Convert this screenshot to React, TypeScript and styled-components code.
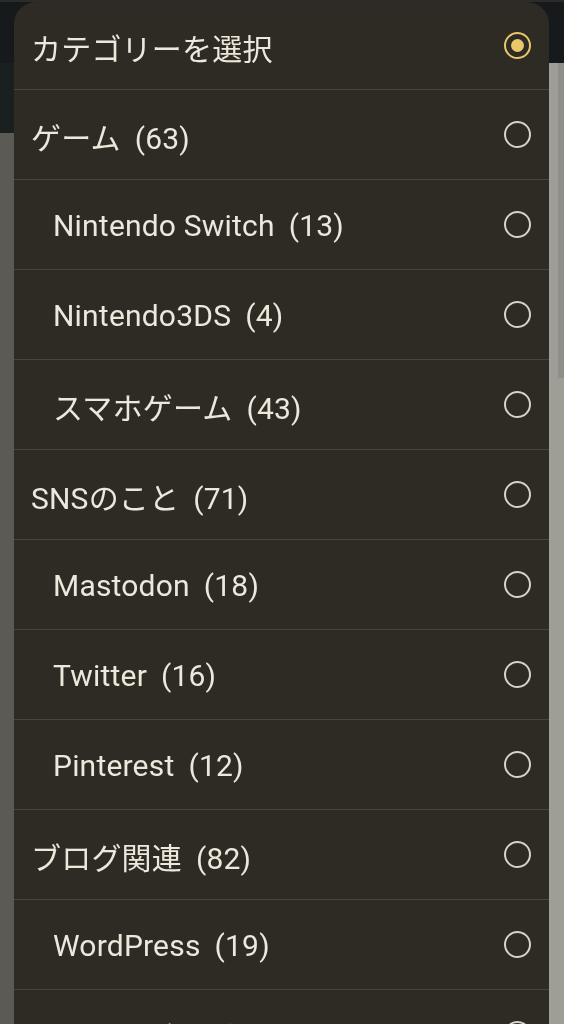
import React, { useState } from "react";
import styled, { createGlobalStyle } from "styled-components";

const GlobalStyle = createGlobalStyle`
  html, body {
    margin: 0;
    padding: 0;
    height: 100%;
    overflow: hidden;
    background: #5b5a54;
    font-family: Roboto, "Noto Sans CJK JP", sans-serif;
  }
`;

const Page = styled.div`
  display: flex;
  flex-direction: column;
  height: 1024px;
  border-top: 2px solid #2b2b29;
`;

const Header = styled.div`
  height: 61px;
  background: #161a1c;
`;

const Body = styled.div`
  flex: 1;
  display: flex;
`;

const LeftRail = styled.div`
  width: 14px;
  display: flex;
  flex-direction: column;
`;

const RailTop = styled.div`
  height: 70px;
  background: #1a1f1f;
`;

const RailRest = styled.div`
  flex: 1;
  background: #5b5a54;
`;

const Content = styled.div`
  flex: 1;
  background: #9e9d96;
  display: flex;
  justify-content: flex-end;
`;

const Scrollbar = styled.div`
  width: 6px;
  height: 315px;
  background: #8f8e88;
`;

const Dialog = styled.div`
  position: fixed;
  left: 14px;
  top: 2px;
  width: 535px;
  height: 1100px;
  background: #2e2b24;
  border-radius: 22px 22px 0 0;
  overflow: hidden;
`;

const Row = styled.label<{ $first?: boolean }>`
  display: flex;
  align-items: center;
  justify-content: space-between;
  height: ${(p) => (p.$first ? 87 : 89)}px;
  border-bottom: 1px solid #47443d;
  padding: 0 17px;
  cursor: pointer;
`;

const Label = styled.span<{ $indent: boolean }>`
  padding-left: ${(p) => (p.$indent ? 22 : 0)}px;
  padding-top: 2px;
  font-size: 30px;
  letter-spacing: 0.2px;
  color: #ede7dc;
  white-space: nowrap;
`;

const Count = styled.span`
  margin-left: 14px;
`;

const Radio = styled.span<{ $on: boolean }>`
  width: 27px;
  height: 27px;
  box-sizing: border-box;
  border-radius: 50%;
  border: 2.5px solid ${(p) => (p.$on ? "#e8c86a" : "#d8d3c7")};
  display: flex;
  align-items: center;
  justify-content: center;
  margin-right: 1px;

  &::after {
    content: "";
    width: 13px;
    height: 13px;
    border-radius: 50%;
    background: #e8c86a;
    display: ${(p) => (p.$on ? "block" : "none")};
  }
`;

type Category = { name: string; count?: number; child?: boolean };

const categories: Category[] = [
  { name: "カテゴリーを選択" },
  { name: "ゲーム", count: 63 },
  { name: "Nintendo Switch", count: 13, child: true },
  { name: "Nintendo3DS", count: 4, child: true },
  { name: "スマホゲーム", count: 43, child: true },
  { name: "SNSのこと", count: 71 },
  { name: "Mastodon", count: 18, child: true },
  { name: "Twitter", count: 16, child: true },
  { name: "Pinterest", count: 12, child: true },
  { name: "ブログ関連", count: 82 },
  { name: "WordPress", count: 19, child: true },
  { name: "はてなブログ", count: 21, child: true },
];

export default function App() {
  const [selected, setSelected] = useState(0);

  return (
    <>
      <GlobalStyle />
      <Page>
        <Header />
        <Body>
          <LeftRail>
            <RailTop />
            <RailRest />
          </LeftRail>
          <Content>
            <Scrollbar />
          </Content>
        </Body>
      </Page>
      <Dialog>
        {categories.map((c, i) => (
          <Row key={c.name} $first={i === 0} onClick={() => setSelected(i)}>
            <Label $indent={!!c.child}>
              {c.name}
              {c.count !== undefined && <Count>({c.count})</Count>}
            </Label>
            <Radio $on={selected === i} />
          </Row>
        ))}
      </Dialog>
    </>
  );
}
